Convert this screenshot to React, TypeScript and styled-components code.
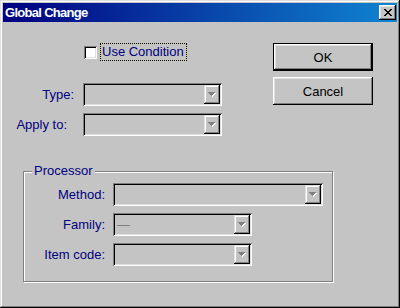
import React from 'react';
import styled, { createGlobalStyle } from 'styled-components';

const BG = '#c4c4c4';
const NAVY = '#000080';

const GlobalStyle = createGlobalStyle`
  html, body { margin: 0; padding: 0; background: ${BG}; }
  body { font-family: "Liberation Sans", Arial, sans-serif; font-size: 13px; }
  * { box-sizing: border-box; }
`;

const Window = styled.div`
  width: 400px;
  height: 308px;
  padding: 3px;
  background: ${BG};
  display: flex;
  flex-direction: column;
  box-shadow: inset -1px -1px #000, inset 1px 1px #dfdfdf, inset -2px -2px #808080, inset 2px 2px #fff;
`;

const TitleBar = styled.div`
  height: 19px;
  display: flex;
  align-items: center;
  justify-content: space-between;
  padding: 0 1px 0 2px;
  background: linear-gradient(90deg, #000080, #1084d0);
`;

const Title = styled.span`
  color: #fff;
  font-weight: bold;
  font-size: 13px;
  letter-spacing: -0.7px;
  line-height: 19px;
`;

const CloseButton = styled.div`
  width: 17px;
  height: 15px;
  background: ${BG};
  display: flex;
  align-items: center;
  justify-content: center;
  box-shadow: inset -1px -1px #000, inset 1px 1px #fff, inset -2px -2px #808080, inset 2px 2px #dfdfdf;
`;

const Body = styled.div`
  flex: 1;
  display: flex;
  flex-direction: column;
  padding: 21px 0 0 12px;
`;

const TopSection = styled.div`
  display: flex;
`;

const LeftFields = styled.div`
  width: 258px;
  display: flex;
  flex-direction: column;
`;

const CheckRow = styled.div`
  display: flex;
  align-items: center;
  height: 18px;
  padding-left: 69px;
`;

const CheckBox = styled.div`
  width: 13px;
  height: 13px;
  margin-right: 3px;
  background: #fff;
  box-shadow: inset 1px 1px #808080, inset -1px -1px #fff, inset 2px 2px #000, inset -2px -2px #dfdfdf;
`;

const CheckLabel = styled.span`
  height: 18px;
  line-height: 16px;
  padding: 0 2px 0 1px;
  color: ${NAVY};
  border: 1px dotted #000;
  background: linear-gradient(${BG}, ${BG}) padding-box, #d8d860 border-box;
`;

const FieldRow = styled.div<{ $top: number }>`
  display: flex;
  align-items: center;
  margin-top: ${(p) => p.$top}px;
`;

const FieldLabel = styled.label<{ $w: number; $gap: number }>`
  width: ${(p) => p.$w}px;
  padding-right: ${(p) => p.$gap}px;
  text-align: right;
  color: ${NAVY};
  white-space: nowrap;
`;

const Combo = styled.div<{ $w: number }>`
  width: ${(p) => p.$w}px;
  height: 23px;
  padding: 2px;
  display: flex;
  background: ${BG};
  box-shadow: inset 1px 1px #808080, inset -1px -1px #fff, inset 2px 2px #000, inset -2px -2px #dfdfdf;
`;

const ComboText = styled.span`
  flex: 1;
  padding-left: 2px;
  line-height: 19px;
  color: #808080;
`;

const ComboButton = styled.div`
  width: 16px;
  height: 19px;
  display: flex;
  align-items: center;
  justify-content: center;
  background: ${BG};
  box-shadow: inset -1px -1px #000, inset 1px 1px #dfdfdf, inset -2px -2px #808080, inset 2px 2px #fff;
`;

const ButtonsCol = styled.div`
  display: flex;
  flex-direction: column;
  gap: 6px;
`;

const PushButton = styled.div<{ $default?: boolean }>`
  width: 100px;
  height: 28px;
  display: flex;
  align-items: center;
  justify-content: center;
  color: #000;
  background: ${BG};
  box-shadow: ${(p) =>
    p.$default
      ? 'inset 1px 1px #000, inset -1px -1px #000, inset -2px -2px #000, inset 2px 2px #fff, inset -3px -3px #808080, inset 3px 3px #dfdfdf'
      : 'inset -1px -1px #000, inset 1px 1px #fff, inset -2px -2px #808080, inset 2px 2px #dfdfdf'};
`;

const GroupBox = styled.div`
  position: relative;
  margin: 35px 0 0 8px;
  width: 310px;
  height: 111px;
  padding-top: 11px;
  border: 1px solid #808080;
  box-shadow: 1px 1px 0 #fff, inset 1px 1px 0 #fff;
`;

const Legend = styled.span`
  position: absolute;
  top: -9px;
  left: 8px;
  padding: 0 2px;
  line-height: 16px;
  color: ${NAVY};
  background: ${BG};
`;

const CloseGlyph = () => (
  <svg width="8" height="7" viewBox="0 0 8 7" shapeRendering="crispEdges">
    <path
      d="M0 0h2v1H0zM6 0h2v1H6zM1 1h2v1H1zM5 1h2v1H5zM2 2h4v1H2zM3 3h2v1H3zM2 4h4v1H2zM1 5h2v1H1zM5 5h2v1H5zM0 6h2v1H0zM6 6h2v1H6z"
      fill="#000"
    />
  </svg>
);

const Arrow = () => (
  <svg width="8" height="5" viewBox="0 0 8 5" shapeRendering="crispEdges">
    <path d="M1 1h7v1H1zM2 2h5v1H2zM3 3h3v1H3zM4 4h1v1H4z" fill="#fff" />
    <path d="M0 0h7v1H0zM1 1h5v1H1zM2 2h3v1H2zM3 3h1v1H3z" fill="#808080" />
  </svg>
);

const ComboBox = ({ w, text }: { w: number; text?: string }) => (
  <Combo $w={w}>
    <ComboText>{text}</ComboText>
    <ComboButton>
      <Arrow />
    </ComboButton>
  </Combo>
);

export default function App() {
  return (
    <>
      <GlobalStyle />
      <Window>
        <TitleBar>
          <Title>Global Change</Title>
          <CloseButton>
            <CloseGlyph />
          </CloseButton>
        </TitleBar>
        <Body>
          <TopSection>
            <LeftFields>
              <CheckRow>
                <CheckBox />
                <CheckLabel>Use Condition</CheckLabel>
              </CheckRow>
              <FieldRow $top={22}>
                <FieldLabel $w={68} $gap={9}>Type:</FieldLabel>
                <ComboBox w={139} />
              </FieldRow>
              <FieldRow $top={7}>
                <FieldLabel $w={68} $gap={16}>Apply to:</FieldLabel>
                <ComboBox w={139} />
              </FieldRow>
            </LeftFields>
            <ButtonsCol>
              <PushButton $default>OK</PushButton>
              <PushButton>Cancel</PushButton>
            </ButtonsCol>
          </TopSection>
          <GroupBox>
            <Legend>Processor</Legend>
            <FieldRow $top={0}>
              <FieldLabel $w={89} $gap={8}>Method:</FieldLabel>
              <ComboBox w={210} />
            </FieldRow>
            <FieldRow $top={7}>
              <FieldLabel $w={89} $gap={8}>Family:</FieldLabel>
              <ComboBox w={139} text="—" />
            </FieldRow>
            <FieldRow $top={7}>
              <FieldLabel $w={89} $gap={8}>Item code:</FieldLabel>
              <ComboBox w={139} />
            </FieldRow>
          </GroupBox>
        </Body>
      </Window>
    </>
  );
}
